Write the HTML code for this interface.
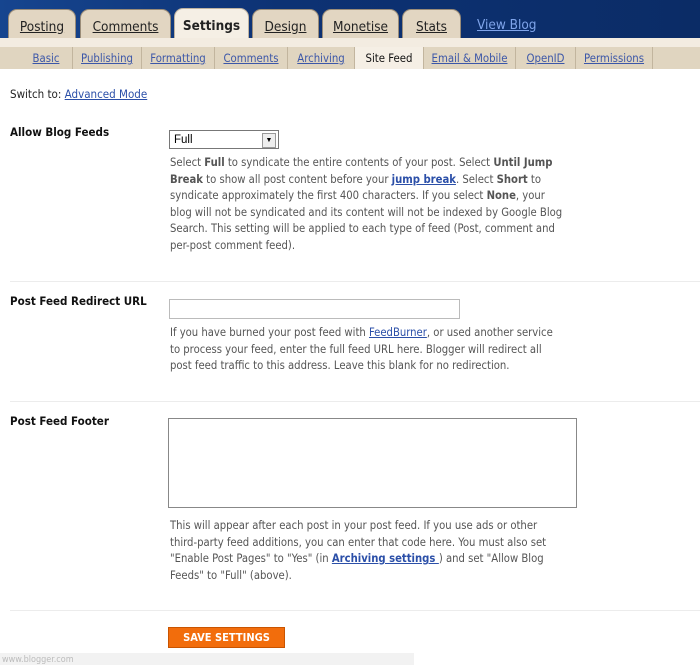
<!DOCTYPE html><html><head><style>
body{margin:0;width:700px;height:665px;overflow:hidden;background:#fff;font-family:"DejaVu Sans Condensed","Liberation Sans",sans-serif;position:relative}
.a{position:absolute}
.top{left:0;top:0;width:700px;height:38px;background:linear-gradient(90deg,#16458f,#0d3274 40%,#0b2c66)}
.tab{top:9px;height:29px;background:#e2d6c2;border:1px solid #9a8c78;border-bottom:none;border-radius:9px 9px 0 0;font-size:13.5px;color:#222;text-align:center;line-height:34px;text-decoration:underline;box-sizing:border-box}
.sel{background:#f5efe5;font-weight:bold;text-decoration:none;height:31px;top:8px;border-color:#bfb3a0}
.band{left:0;top:38px;width:700px;height:9px;background:#f3ece1}
.sub{left:0;top:47px;width:700px;height:22px;background:#e0d5c0}
.st{top:47px;height:22px;font-size:11.3px;line-height:24px;color:#3c57a8;text-decoration:underline;text-align:center;border-right:1px solid #c2b59e;box-sizing:border-box}
.txt{font-size:11.2px;color:#555;line-height:16.6px;white-space:nowrap}
.lbl{font-size:11.5px;font-weight:bold;color:#111;left:10px}
a{color:#2b4fa8}
.hr{left:10px;width:690px;height:1px;background:#ececec}
</style></head><body>
<div class="a top"></div>
<div class="a tab" style="left:8px;width:68px">Posting</div>
<div class="a tab" style="left:80px;width:91px">Comments</div>
<div class="a tab sel" style="left:174px;width:75px">Settings</div>
<div class="a tab" style="left:252px;width:67px">Design</div>
<div class="a tab" style="left:322px;width:77px">Monetise</div>
<div class="a tab" style="left:402px;width:59px">Stats</div>
<div class="a" style="left:477px;top:17px;font-size:13.5px;color:#7fa4ea;text-decoration:underline">View Blog</div>
<div class="a band"></div>
<div class="a sub"></div>
<div class="a st" style="left:20px;width:53px">Basic</div>
<div class="a st" style="left:73px;width:69px">Publishing</div>
<div class="a st" style="left:142px;width:73px">Formatting</div>
<div class="a st" style="left:215px;width:73px">Comments</div>
<div class="a st" style="left:288px;width:67px">Archiving</div>
<div class="a st" style="left:355px;width:69px;background:#f5efe5;color:#111;text-decoration:none">Site Feed</div>
<div class="a st" style="left:424px;width:92px">Email &amp; Mobile</div>
<div class="a st" style="left:516px;width:60px">OpenID</div>
<div class="a st" style="left:576px;width:77px">Permissions</div>
<div class="a" style="left:10px;top:87px;font-size:11.5px;color:#222">Switch to: <a href="#">Advanced Mode</a></div>

<div class="a lbl" style="top:125px">Allow Blog Feeds</div>
<div class="a" style="left:169px;top:130px;width:110px;height:19px;border:1px solid #777;box-sizing:border-box;font-size:11.5px;line-height:18px;padding-left:4px;font-family:'Liberation Sans',sans-serif">Full<span class="a" style="right:2px;top:2px;width:12px;height:13px;border:1px solid #999;background:#eee;font-size:7px;line-height:13px;text-align:center">▼</span></div>
<div class="a txt" style="left:170px;top:155px">Select <b>Full</b> to syndicate the entire contents of your post. Select <b>Until Jump</b><br><b>Break</b> to show all post content before your <a href="#"><b>jump break</b></a>. Select <b>Short</b> to<br>syndicate approximately the first 400 characters. If you select <b>None</b>, your<br>blog will not be syndicated and its content will not be indexed by Google Blog<br>Search. This setting will be applied to each type of feed (Post, comment and<br>per-post comment feed).</div>
<div class="a hr" style="top:281px"></div>

<div class="a lbl" style="top:294px">Post Feed Redirect URL</div>
<div class="a" style="left:169px;top:299px;width:291px;height:20px;border:1px solid #bbb;box-sizing:border-box"></div>
<div class="a txt" style="left:170px;top:325px">If you have burned your post feed with <a href="#">FeedBurner</a>, or used another service<br>to process your feed, enter the full feed URL here. Blogger will redirect all<br>post feed traffic to this address. Leave this blank for no redirection.</div>
<div class="a hr" style="top:401px"></div>

<div class="a lbl" style="top:414px">Post Feed Footer</div>
<div class="a" style="left:168px;top:418px;width:409px;height:90px;border:1px solid #888;box-sizing:border-box"></div>
<div class="a txt" style="left:170px;top:518px">This will appear after each post in your post feed. If you use ads or other<br>third-party feed additions, you can enter that code here. You must also set<br>"Enable Post Pages" to "Yes" (in <a href="#"><b>Archiving settings </b></a>) and set "Allow Blog<br>Feeds" to "Full" (above).</div>
<div class="a hr" style="top:610px"></div>

<div class="a" style="left:168px;top:627px;width:117px;height:21px;background:#f26d0c;border:1px solid #c95400;box-sizing:border-box;color:#fff;font-weight:bold;font-size:11px;text-align:center;line-height:20px">SAVE SETTINGS</div>
<div class="a" style="left:0;top:653px;width:412px;height:12px;background:#f2f2f2;font-size:9px;color:#bbb;line-height:14px;padding-left:2px">www.blogger.com</div>
</body></html>
